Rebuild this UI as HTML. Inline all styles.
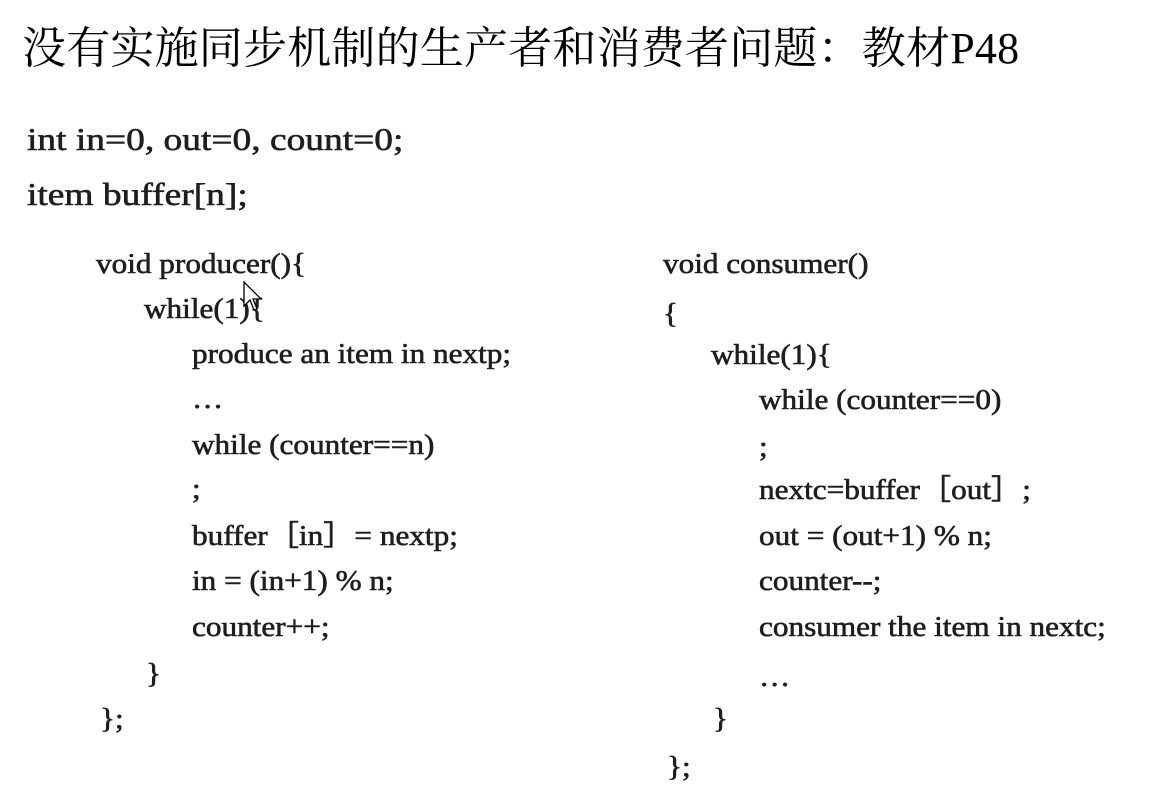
<!DOCTYPE html>
<html><head><meta charset="utf-8"><style>
body{margin:0;width:1160px;height:809px;background:#fff;overflow:hidden;position:relative}
.t{position:absolute;left:22px;top:24px;font-family:"Liberation Serif","Noto Serif CJK SC",serif;font-size:44px;line-height:50px;color:#000;white-space:nowrap;letter-spacing:0.2px}
.l{position:absolute;font-family:"Liberation Serif",serif;font-size:28px;line-height:34px;color:#1e1e1e;white-space:nowrap;-webkit-text-stroke:0.6px #1e1e1e;transform:scaleX(1.115);transform-origin:0 50%}
.b{font-size:32px;transform:scaleX(1.17)}
</style></head><body>
<div class="t">没有实施同步机制的生产者和消费者问题：教材P48</div>
<div class="l b" style="left:27px;top:122px">int in=0, out=0, count=0;</div>
<div class="l b" style="left:27px;top:177px">item buffer[n];</div>

<div class="l" style="left:96px;top:248px">void producer(){</div>
<div class="l" style="left:144px;top:293px">while(1){</div>
<div class="l" style="left:192px;top:338px">produce an item in nextp;</div>
<div class="l" style="left:192px;top:383px">…</div>
<div class="l" style="left:192px;top:429px">while (counter==n)</div>
<div class="l" style="left:192px;top:473px">;</div>
<div class="l" style="left:192px;top:520px">buffer［in］= nextp;</div>
<div class="l" style="left:192px;top:565px">in = (in+1) % n;</div>
<div class="l" style="left:192px;top:611px">counter++;</div>
<div class="l" style="left:146px;top:658px">}</div>
<div class="l" style="left:100px;top:703px">};</div>

<div class="l" style="left:663px;top:248px">void consumer()</div>
<div class="l" style="left:663px;top:298px">{</div>
<div class="l" style="left:711px;top:339px">while(1){</div>
<div class="l" style="left:759px;top:384px">while (counter==0)</div>
<div class="l" style="left:759px;top:431px">;</div>
<div class="l" style="left:759px;top:474px">nextc=buffer［out］;</div>
<div class="l" style="left:759px;top:520px">out = (out+1) % n;</div>
<div class="l" style="left:759px;top:565px">counter--;</div>
<div class="l" style="left:759px;top:611px">consumer the item in nextc;</div>
<div class="l" style="left:759px;top:661px">…</div>
<div class="l" style="left:713px;top:703px">}</div>
<div class="l" style="left:667px;top:751px">};</div>

<svg style="position:absolute;left:243px;top:281px" width="22" height="34" viewBox="0 0 22 34"><path d="M1 1 L1 25 L7 19 L11 29 L14 28 L10 18 L18 18 Z" fill="#fff" stroke="#000" stroke-width="1.3"/></svg>
</body></html>
